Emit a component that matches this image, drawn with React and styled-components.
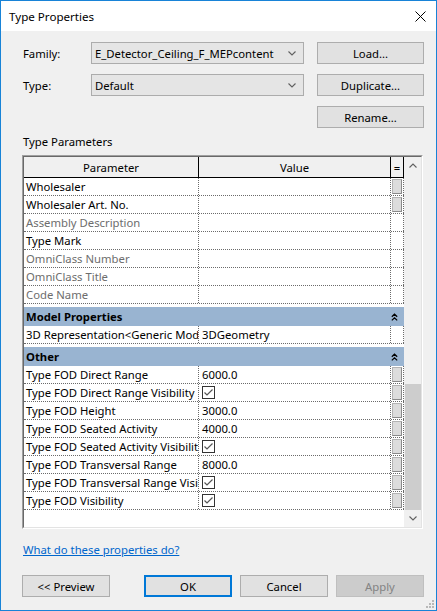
import styled, { createGlobalStyle } from "styled-components"

const GlobalStyle = createGlobalStyle`
html, body {
  margin: 0;
  padding: 0;
  background: #fff;
}
body {
  font-family: "Segoe UI", "Noto Sans", sans-serif;
  font-size: 11.3px;
  color: #000;
}
`

const Window = styled.div`
width: 437px;
height: 611px;
box-sizing: border-box;
border: 1px solid #1883d7;
background: #f0f0f0;
display: flex;
flex-direction: column;
position: relative;
`

const TitleBar = styled.div`
height: 30px;
background: #fff;
display: flex;
align-items: center;
justify-content: space-between;
padding: 0 10px 0 8px;
flex-shrink: 0;
`

const Title = styled.div`
font-size: 11.6px;
`

const Body = styled.div`
flex: 1;
display: flex;
flex-direction: column;
padding: 11px 13px 0 21px;
`

const TopGrid = styled.div`
display: grid;
grid-template-columns: 69px 226px 107px;
grid-template-rows: 22px 22px 22px;
row-gap: 10px;
align-items: center;
`

const Label = styled.div`
padding-left: 1px;
`

const Combo = styled.div`
width: 213px;
height: 22px;
box-sizing: border-box;
background: #e5e5e5;
border: 1px solid #acacac;
display: flex;
align-items: center;
justify-content: space-between;
padding: 0 7px 0 3px;
`

const Button = styled.div`
width: ${p => p.$w || 107}px;
height: 22px;
box-sizing: border-box;
background: ${p => (p.$disabled ? "#cccccc" : "#e1e1e1")};
border: ${p => (p.$default ? "2px solid #0078d7" : p.$disabled ? "1px solid #bfbfbf" : "1px solid #adadad")};
color: ${p => (p.$disabled ? "#838383" : "#000")};
display: flex;
align-items: center;
justify-content: center;
`

const SectionLabel = styled.div`
height: 16px;
line-height: 16px;
margin: 6px 0 5px 1px;
`

const TableOuter = styled.div`
width: 401px;
height: 374px;
box-sizing: border-box;
border-style: solid;
border-width: 1px;
border-color: #a0a0a0 #fff #fff #a0a0a0;
`

const TableInner = styled.div`
height: 100%;
box-sizing: border-box;
border-style: solid;
border-width: 1px;
border-color: #696969 #e3e3e3 #e3e3e3 #696969;
display: flex;
`

const Grid = styled.div`
width: 380px;
background: #fff;
overflow: hidden;
`

const HeaderRow = styled.div`
display: grid;
grid-template-columns: 175px 192px 13px;
height: 21px;
box-sizing: border-box;
background: #f0f0f0;
border-bottom: 1px solid #000;
`

const HeaderCell = styled.div`
border-right: 1px solid #000;
display: flex;
align-items: center;
justify-content: center;
`

const Row = styled.div`
display: grid;
grid-template-columns: 175px 192px 13px;
height: 18px;
box-sizing: border-box;
border-bottom: 1px dotted #6a6a6a;
`

const Cell = styled.div`
border-right: 1px dotted #6a6a6a;
display: flex;
align-items: center;
padding-left: ${p => p.$pad || 0}px;
white-space: nowrap;
overflow: hidden;
color: ${p => (p.$dim ? "#6d6d6d" : "#000")};
`

const ShareButton = styled.div`
width: 10px;
height: 15px;
margin: 0 0 0 1px;
box-sizing: border-box;
background: #dcdcdc;
border: 1px solid #b4b4b4;
border-right-color: #8a8a8a;
border-bottom-color: #8a8a8a;
`

const CheckBox = styled.div`
width: 13px;
height: 13px;
box-sizing: border-box;
border: 1px solid #333;
margin-left: 3px;
display: flex;
align-items: center;
justify-content: center;
`

const GroupHeader = styled.div`
margin-top: 3px;
height: 19px;
background: #99b4d1;
display: flex;
align-items: center;
justify-content: space-between;
padding: 0 6px 0 2px;
font-weight: 700;
`

const ScrollBar = styled.div`
width: 17px;
background: #f0f0f0;
display: flex;
flex-direction: column;
`

const ArrowBox = styled.div`
height: 17px;
display: flex;
align-items: center;
justify-content: center;
`

const Track = styled.div`
flex: 1;
display: flex;
flex-direction: column;
justify-content: flex-end;
`

const Thumb = styled.div`
height: 126px;
margin: 0 0 0 1px;
background: #cdcdcd;
`

const Link = styled.div`
margin: 13px 0 0 1px;
height: 16px;
line-height: 16px;
color: #0066cc;
text-decoration: underline;
align-self: flex-start;
`

const ButtonRow = styled.div`
margin-top: 17px;
display: flex;
justify-content: space-between;
width: 402px;
`

const ButtonGroup = styled.div`
display: flex;
gap: 8px;
`

const Grip = styled.svg`
position: absolute;
right: 1px;
bottom: 1px;
`

const Chevron = ({ up, color = "#606060" }) => (
  <svg width="8" height="5" viewBox="0 0 8 5">
    <polyline
      points={up ? "0.5,4.5 4,1 7.5,4.5" : "0.5,0.5 4,4 7.5,0.5"}
      fill="none"
      stroke={color}
      strokeWidth="1.1"
    />
  </svg>
)

const Collapse = () => (
  <svg width="7" height="8" viewBox="0 0 7 8">
    <path d="M0.8 3.8 L3.5 1.2 L6.2 3.8 M0.8 7.4 L3.5 4.8 L6.2 7.4" fill="none" stroke="#000" strokeWidth="1.2" />
  </svg>
)

const Check = () => (
  <CheckBox>
    <svg width="11" height="11" viewBox="0 0 11 11">
      <polyline points="1.5,5.5 4,8 9.5,2.5" fill="none" stroke="#555" strokeWidth="1.2" />
    </svg>
  </CheckBox>
)

const ParamRow = ({ name, value, dim, check, share }) => (
  <Row>
    <Cell $pad={2} $dim={dim}>{name}</Cell>
    <Cell $pad={check ? 0 : 3}>{check ? <Check /> : value}</Cell>
    <Cell>{share && <ShareButton />}</Cell>
  </Row>
)

const IDENTITY = [
  { name: "Wholesaler", share: true },
  { name: "Wholesaler Art. No.", share: true },
  { name: "Assembly Description", dim: true },
  { name: "Type Mark" },
  { name: "OmniClass Number", dim: true },
  { name: "OmniClass Title", dim: true },
  { name: "Code Name", dim: true },
]

const OTHER = [
  { name: "Type FOD Direct Range", value: "6000.0" },
  { name: "Type FOD Direct Range Visibility", check: true },
  { name: "Type FOD Height", value: "3000.0" },
  { name: "Type FOD Seated Activity", value: "4000.0" },
  { name: "Type FOD Seated Activity Visibility", check: true },
  { name: "Type FOD Transversal Range", value: "8000.0" },
  { name: "Type FOD Transversal Range Visibility", check: true },
  { name: "Type FOD Visibility", check: true },
]

const App = () => {
  return (
    <Window>
      <GlobalStyle />
      <TitleBar>
        <Title>Type Properties</Title>
        <svg width="11" height="11" viewBox="0 0 11 11">
          <path d="M0.5 0.5 L10.5 10.5 M10.5 0.5 L0.5 10.5" stroke="#000" strokeWidth="1" />
        </svg>
      </TitleBar>

      <Body>
        <TopGrid>
          <Label>Family:</Label>
          <Combo>
            E_Detector_Ceiling_F_MEPcontent
            <Chevron />
          </Combo>
          <Button>Load...</Button>

          <Label>Type:</Label>
          <Combo>
            Default
            <Chevron />
          </Combo>
          <Button>Duplicate...</Button>

          <div />
          <div />
          <Button>Rename...</Button>
        </TopGrid>

        <SectionLabel>Type Parameters</SectionLabel>

        <TableOuter>
          <TableInner>
            <Grid>
              <HeaderRow>
                <HeaderCell>Parameter</HeaderCell>
                <HeaderCell>Value</HeaderCell>
                <HeaderCell>=</HeaderCell>
              </HeaderRow>

              {IDENTITY.map((r, i) => (
                <ParamRow key={String(i)} {...r} />
              ))}

              <GroupHeader>
                Model Properties
                <Collapse />
              </GroupHeader>
              <ParamRow name="3D Representation<Generic Model>" value="3DGeometry" />

              <GroupHeader>
                Other
                <Collapse />
              </GroupHeader>
              {OTHER.map((r, i) => (
                <ParamRow key={String(i)} {...r} share />
              ))}
            </Grid>

            <ScrollBar>
              <ArrowBox>
                <Chevron up />
              </ArrowBox>
              <Track>
                <Thumb />
              </Track>
              <ArrowBox>
                <Chevron />
              </ArrowBox>
            </ScrollBar>
          </TableInner>
        </TableOuter>

        <Link>What do these properties do?</Link>

        <ButtonRow>
          <Button $w={88}>&lt;&lt; Preview</Button>
          <ButtonGroup>
            <Button $w={88} $default>OK</Button>
            <Button $w={88}>Cancel</Button>
            <Button $w={88} $disabled>Apply</Button>
          </ButtonGroup>
        </ButtonRow>
      </Body>

      <Grip width="10" height="10" viewBox="0 0 10 10">
        {[[8, 2], [8, 5], [8, 8], [5, 5], [5, 8], [2, 8]].map(([x, y], i) => (
          <rect key={String(i)} x={x - 1} y={y - 1} width="2" height="2" fill="#b8b8b8" />
        ))}
      </Grip>
    </Window>
  )
}

export default App
